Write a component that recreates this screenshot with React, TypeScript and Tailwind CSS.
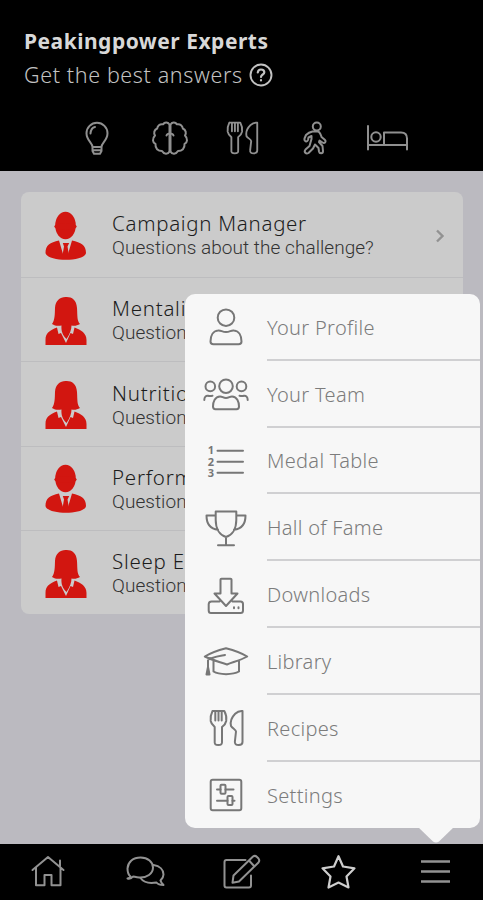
import React from "react";

type IconProps = { children: React.ReactNode; box?: string; className?: string };

function Icon({ children, box = "0 0 46 40", className = "h-10 w-[46px]" }: IconProps) {
  return (
    <svg viewBox={box} className={className} fill="none" stroke="currentColor" strokeWidth="2" strokeLinecap="round" strokeLinejoin="round">
      {children}
    </svg>
  );
}

const cutlery = (
  <>
    <path d="M9.500 3C8 6 7.300 10 7.700 13C8.200 16 10 17.500 11.700 19V33.500C11.300 36 12.500 37 15.300 37C18.200 37 19.400 36 19 33.500V19C21 17.500 22.700 16 23.200 13C23.600 10 23 6 21.300 3H18.700V12.500M9.500 3H12.300V12.500M15.500 3V12.500M12.300 3H18.700" />
    <path d="M39.500 3V34C39.500 36 38.300 37 35.800 37C33 37 31.500 36 31.900 33.500L33 23.500C33 21.500 29.500 20.500 28 18C27.200 14.500 28.500 9.500 32.200 5.800C34.500 3.500 37 2.700 39.500 3Z" />
  </>
);

const tabs = [
  <>
    <path d="M17.500 27C17.500 23 11.500 20.500 11.500 13.300A10.500 10.500 0 0 1 32.500 13.300C32.500 20.500 26.500 23 26.500 27ZM17.500 27V31L19 33.700H25L26.500 31V27M17.500 30.200H26.500" />
    <path d="M15.500 13.500C15.800 9.500 17.500 7.500 20 7" />
  </>,
  <>
    <path d="M21.500 4.500C19.500 1.500 16.500 2.300 15 4.300C11.500 3.700 9.500 6 9.200 8.500C6 10 5.500 13 7 15.500C4 18.500 4.500 22.500 7.500 24C7 28.500 10 31 14 31C16 34.500 20 34.500 21.500 31.500ZM22.500 4.500C24.500 1.500 27.500 2.300 29 4.300C32.500 3.700 34.500 6 34.800 8.500C38 10 38.500 13 37 15.500C40 18.500 39.500 22.500 36.500 24C37 28.500 34 31 30 31C28 34.500 24 34.500 22.500 31.500Z" />
    <path d="M18.500 15.500C19 14 20.500 13.500 22 13.500C23.500 13.500 25 14 25.500 15.500M22 13V31" />
  </>,
  <g transform="translate(0.5 0) scale(.93 .9)">{cutlery}</g>,
  <path d="M27.800 6.500A4 4 0 1 1 19.800 6.500A4 4 0 1 1 27.800 6.500M19.500 11.500H24.500C27 11.500 27.500 14 28.500 17L31.500 19.500C34 21.500 31.500 24 29.500 22.500L26.500 20.500L26 22L29.500 26L30 31C30 34 26.500 34 26 31.500L25.500 28L22 24.500L20 28.500L15.500 33C13 34.500 10.500 32 12.500 29.500L16.500 26L18.500 19V16L15.500 17.500L15 20C14 22.500 11 21.500 11.500 18.500L13 15C15 13 17 12 19.500 11.500Z" />,
  <>
    <path d="M2 6V29.500M2 25H41M18 12.500V24.500M18 12.500H35C39 12.500 41 15 41 18.500V29.500" />
    <circle cx="10" cy="17" r="4.700" />
  </>,
];

const menu = [
  { label: "Your Profile", icon: <><circle cx="23" cy="10.700" r="8.300" /><path d="M15 23.500C18 23 19 25 23 25C27 25 28 23 31 23.500C36 24 38.500 29 38.500 34.500C38.500 36.500 37.500 37.300 35.500 37.300H10.500C8.500 37.300 7.500 36.500 7.500 34.500C7.500 29 10 24 15 23.500Z" /></> },
  { label: "Your Team", icon: <><circle cx="23" cy="12.200" r="6.800" /><circle cx="7.300" cy="12.400" r="4.800" /><circle cx="38.500" cy="12.400" r="4.800" /><path d="M17 22.500C19.500 22.500 20 24 23 24C26 24 26.500 22.500 29 22.500C34 22.500 36 28 36 32.500C36 34.500 35 35.200 33.500 35.200H12.500C11 35.200 10 34.500 10 32.500C10 28 12 22.500 17 22.500ZM1.300 26C1.300 23 3 21.500 5 21.700C6.500 22.200 8 22 9.500 21.700M44.700 26C44.700 23 43 21.500 41 21.700C39.500 22.200 38 22 36.500 21.700" /></> },
  { label: "Medal Table", icon: <><path d="M14.500 9.700H40M14.500 20.700H40M14.500 31.800H40" /><g fill="currentColor" stroke="none" className="font-['Noto_Sans',sans-serif] text-[11px] font-bold" textAnchor="middle"><text x="8" y="13">1</text><text x="8" y="24.500">2</text><text x="8" y="35.500">3</text></g></> },
  { label: "Hall of Fame", icon: <path d="M12.700 3.500H33.300V12C33.300 20.500 29.500 27 23 29C16.500 27 12.700 20.500 12.700 12ZM12.700 7.500H3.500C3.500 16.500 8 21 15 21.800M33.300 7.500H42.500C42.500 16.500 38 21 31 21.800M23 29V37.200M15 37.200H31" /> },
  { label: "Downloads", icon: <><path d="M17.500 4.500Q17.500 3.800 18.500 3.800H27.500Q28.500 3.800 28.500 4.500V18.500H34.500L23 31L11.500 18.500H17.500ZM16.500 26.500H8.500Q6 26.500 5.700 29V35.500Q5.700 38 8 38H37.500Q40 38 40 35.500V29Q40 26.500 37.500 26.500H29.500" /><path d="M31 32.300V33.300M35.500 32.300V33.300" /></> },
  { label: "Library", icon: <><path d="M1.800 15.500C9 11 16 9 23 7.200C30 9 37 11 44.200 15.500C37 19.500 30 21 24 23.500C17 21 9 19 1.800 15.500ZM10.500 19.500V30.500C16 34 30 34 36 30.500V19.500M22 14C14 15.500 7 16.500 5 19V26" /><path d="M5 26L3.500 33.500H6.500Z" fill="currentColor" /></> },
  { label: "Recipes", icon: cutlery },
  { label: "Settings", icon: <><rect x="7.700" y="4.700" width="30.600" height="30.600" rx="2" /><path d="M14 14.500H17.500M22.500 14.500H30.500M14 25.700H24.500M29.500 25.700H31.500" /><rect x="17.500" y="9.800" width="5" height="9" rx="1" /><rect x="24.500" y="21" width="5" height="9" rx="1" /></> },
];

const footer = [
  <path d="M6.500 21L22 8L37.500 21M10 18.500V36.300H18.500V26H25.500V36.300H34.500V18.500M34 17V11.500" />,
  <>
    <path d="M7.500 27.500C5 25.500 4.500 22.500 4.500 19.500C5 13 10 8.500 17.500 8.500C25 8.500 30 13 30 18.500C30 24.500 24 29 16 28.500C13 28.300 11 27.500 10 27.500C8.500 29.500 6.500 30 4.500 29.500C6.500 29 7.500 28.500 7.500 27.500Z" />
    <path d="M30.500 16C37 17 40.500 21 40.500 25.500C40.500 28.500 38.500 30.500 37.500 31.500C38 33.500 39 34.500 40.500 36C37.500 36 35 35.500 33.500 33.500C25 35 20 32.500 17.500 29" />
  </>,
  <>
    <path d="M26.500 11H7.500Q5.500 11 5.500 13V36.500Q5.500 38.500 7.500 38.500H30Q32 38.500 32 36.500V26.500" />
    <path d="M13.500 33.700L14.500 26.500L34 7.500Q36 6 38 8L39.500 9.500Q41 11.500 39.500 13.500L20 32.500ZM30 11.500L35.500 17.500" />
  </>,
  <path d="M22.500 7.200L27 17.500L38.500 19.300L30.500 27.500L32.500 38.500L22.500 33.500L12.500 38.500L14.500 27.500L6.500 19.300L18 17.500Z" strokeWidth="2.200" />,
  <path d="M8 12.500H37M8 22.500H37M8 32.500H37" strokeWidth="2.300" strokeLinecap="butt" />,
];

function Expert({ female }: { female: boolean }) {
  return (
    <svg viewBox="0 0 44 50" className="h-[50px] w-11" fill="#d21610">
      {female ? (
        <path d="M8 28C11 24 10.800 18 11 12C11.500 4.500 16 1 21.500 1C27 .5 32.500 3 33 12C33.500 20 33 25 36 28C33 29.800 30.500 30 27.500 29.500C27.500 33 26 38 22.500 43C18.500 39 17 35 17.500 29.500C14 30 11 30 8 28ZM1.500 49V44C1.500 37 5.500 34.500 13 31.500L14.500 38L17 37L22 47L26.500 37L29 38L30.500 31.500C37 34 42.500 37 42.500 44V49Z" />
      ) : (
        <>
          <ellipse cx="21.500" cy="14.500" rx="10.300" ry="13.800" />
          <ellipse cx="21.500" cy="15.500" rx="11.300" ry="3.500" />
          <path d="M1.500 42C1.500 34 6 31.500 15 29.500L19 43H24L28 29.500C37 31.500 42 34 42 42C41 51 3 51 1.500 42Z" />
          <path d="M18.800 32H25.200L23.500 35.500L25 44H18.500L20 35.500Z" />
        </>
      )}
    </svg>
  );
}

const experts = [
  ["Campaign Manager", "Questions about the challenge?", false],
  ["Mentality", "Questions", true],
  ["Nutrition", "Questions", true],
  ["Performance", "Questions", false],
  ["Sleep Expert", "Questions", true],
] as const;

export default function App() {
  return (
    <div className="relative flex h-[900px] w-[483px] flex-col overflow-hidden bg-[#bbbac0] font-['Noto_Sans',sans-serif]">
      <header className="h-[171px] shrink-0 bg-black text-[#d8d8d8]">
        <div className="pt-6 pl-6">
          <h1 className="h-[34px] text-[21px] leading-[34px] font-bold tracking-[0.5px] whitespace-nowrap">Peakingpower Experts</h1>
          <div className="flex h-[34px] items-center text-[#c2c2c2]">
            <span className="w-[225px] pt-px text-[21.500px] font-[350] tracking-[0.62px] whitespace-nowrap">Get the best answers</span>
            <svg viewBox="0 0 24 24" className="h-6 w-6" fill="none" stroke="currentColor" strokeWidth="1.900" strokeLinecap="round"><circle cx="12" cy="12" r="10.500" /><path d="M8.800 9.500C9 7.500 10.200 6.500 12 6.500C14 6.500 15.300 7.600 15.300 9.200C15.300 11.500 12 11.500 12 14M12 17.200V17.500" strokeWidth="2.200" /></svg>
          </div>
        </div>
        <nav className="ml-[61px] mt-7 flex w-[363px] text-[#909090]">
          {tabs.map((icon, i) => <div key={i} className="flex flex-1 justify-center"><Icon box="0 0 44 36" className="h-9 w-11">{icon}</Icon></div>)}
        </nav>
      </header>

      <main className="flex-1 pt-[21px] pl-[21px]">
        <div className="w-[442px] overflow-hidden rounded-lg bg-[#cbcbcb]">
          {experts.map(([title, text, female], i) => (
            <div key={title} className={`flex items-center pt-0.5 pl-[23px] ${i === 0 ? "h-[86px]" : i === 4 ? "h-[83px]" : "h-[84.400px]"} ${i < 4 ? "border-b border-[#bdbdbf]" : ""}`}>
              <Expert female={female} />
              <div className="ml-6 flex-1 whitespace-nowrap">
                <div className={`h-[25px] text-[20.500px] leading-[25px] font-[350] text-[#1c1c1c] ${i === 0 ? "tracking-[0.7px]" : "tracking-[0.75px]"}`}>{title}</div>
                <div className="h-[24px] font-['Roboto',sans-serif] text-[19px] leading-[24px] font-light tracking-[0.05px] text-[#333]">{text}</div>
              </div>
              <svg viewBox="0 0 10 14" className="mr-[18px] h-3.5 w-2.5" fill="none" stroke="#929292" strokeWidth="2.400"><path d="M2 1.500L7.500 7L2 12.500" /></svg>
            </div>
          ))}
        </div>
      </main>

      <footer className="flex h-14 shrink-0 bg-black text-[#929292]">
        {footer.map((icon, i) => (
          <div key={i} className={`flex flex-1 justify-center pt-[5px] ${i === 3 ? "text-[#cecece]" : ""}`}>
            <Icon box="0 0 44 46" className="h-[46px] w-11">{icon}</Icon>
          </div>
        ))}
      </footer>

      <aside className="absolute top-[294px] left-[185px] w-[295px] rounded-[10px] bg-[#f7f7f7] text-[#777]">
        {menu.map(({ label, icon }, i) => (
          <div key={label} className="flex h-[66.800px] items-center pl-[18px]">
            <Icon>{icon}</Icon>
            <div className={`ml-[18px] flex h-full flex-1 items-center pt-[3px] text-[20px] font-light tracking-[0.3px] whitespace-nowrap text-[#7c7c7c] ${i < 7 ? "border-b-2 border-[#d0d0d2]" : ""}`}>{label}</div>
          </div>
        ))}
        <svg viewBox="0 0 36 16" className="absolute top-full left-[233px] -mt-px h-4 w-9" fill="#f7f7f7"><path d="M0 0H36L21 14.500Q18 16.500 15 14.500Z" /></svg>
      </aside>
    </div>
  );
}
